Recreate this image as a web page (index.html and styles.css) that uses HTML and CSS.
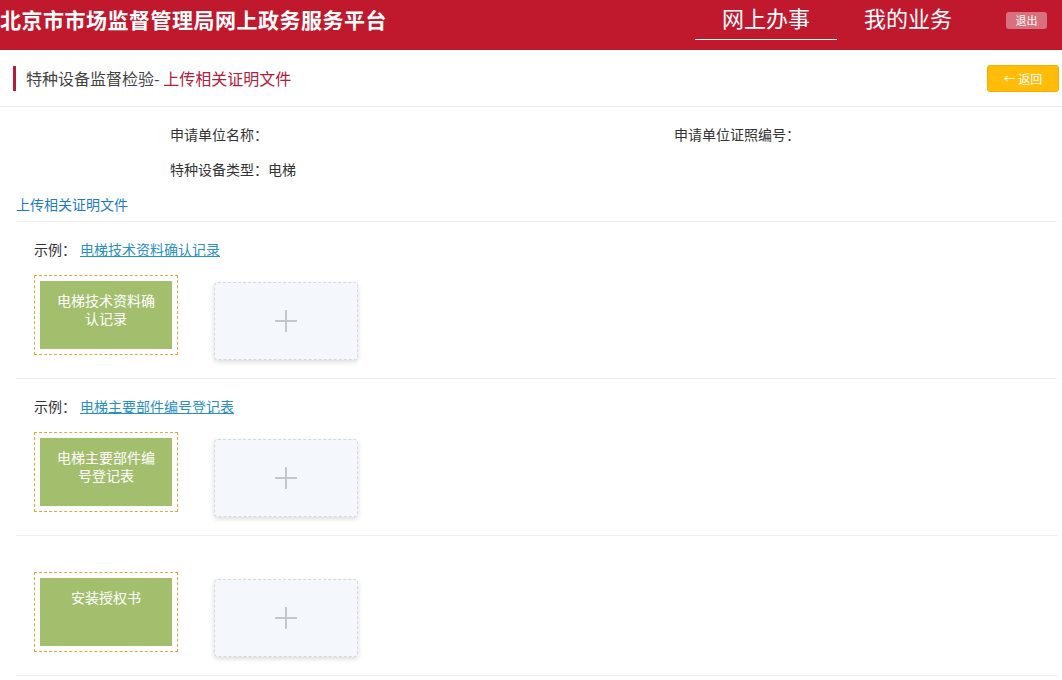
FILE: index.html
```html
<!DOCTYPE html>
<html lang="zh-CN">
<head>
    <meta charset="UTF-8">
    <meta name="viewport" content="width=device-width, initial-scale=1.0">
    <title>上传相关证明文件</title>
    <link rel="stylesheet" href="styles.css">
</head>
<body>

    <div class="top-bar">
        <div class="site-title">北京市市场监督管理局网上政务服务平台</div>
        <div class="nav">
            <a class="nav-item active">网上办事</a>
            <a class="nav-item">我的业务</a>
        </div>
        <a class="logout">退出</a>
    </div>

    <div class="page-head">
        <div class="page-title">特种设备监督检验- <span class="page-title-sub">上传相关证明文件</span></div>
        <a class="back-btn">← 返回</a>
    </div>

    <div class="main">
        <div class="info-grid">
            <div class="info-item">申请单位名称：</div>
            <div class="info-item">申请单位证照编号：</div>
            <div class="info-item">特种设备类型：电梯</div>
        </div>

        <div class="upload-title">上传相关证明文件</div>

        <div class="upload-section">
            <p class="example">示例：<a class="example-link">电梯技术资料确认记录</a></p>
            <div class="tile-row">
                <div class="sample-tile"><div class="sample-inner">电梯技术资料确认记录</div></div>
                <div class="upload-box">
                    <svg width="24" height="24" viewBox="0 0 24 24"><path d="M12 1v22M1 12h22" stroke="#c3c6cc" stroke-width="2" fill="none"/></svg>
                </div>
            </div>
        </div>

        <div class="upload-section">
            <p class="example">示例：<a class="example-link">电梯主要部件编号登记表</a></p>
            <div class="tile-row">
                <div class="sample-tile"><div class="sample-inner">电梯主要部件编号登记表</div></div>
                <div class="upload-box">
                    <svg width="24" height="24" viewBox="0 0 24 24"><path d="M12 1v22M1 12h22" stroke="#c3c6cc" stroke-width="2" fill="none"/></svg>
                </div>
            </div>
        </div>

        <div class="upload-section no-example">
            <div class="tile-row">
                <div class="sample-tile"><div class="sample-inner">安装授权书</div></div>
                <div class="upload-box">
                    <svg width="24" height="24" viewBox="0 0 24 24"><path d="M12 1v22M1 12h22" stroke="#c3c6cc" stroke-width="2" fill="none"/></svg>
                </div>
            </div>
        </div>
    </div>

</body>
</html>
```

FILE: styles.css
```css
*{
    margin: 0;
    padding: 0;
    box-sizing: border-box;
}

body{
    font-family: "Noto Sans CJK SC", "Liberation Sans", sans-serif;
    color: #333;
    background: #fff;
    font-size: 14px;
}

a{
    text-decoration: none;
    cursor: pointer;
}

.top-bar{
    height: 50px;
    background: #c0192e;
    display: flex;
    align-items: flex-start;
    color: #fff;
}

.top-bar .site-title{
    font-size: 21px;
    font-weight: bold;
    line-height: 24px;
    padding-top: 7px;
    letter-spacing: 0.5px;
}

.top-bar .nav{
    margin-left: auto;
    display: flex;
}

.top-bar .nav-item{
    width: 142px;
    height: 40px;
    line-height: 34px;
    text-align: center;
    font-size: 22px;
    color: #fff;
    border-bottom: 1px solid transparent;
}

.top-bar .nav-item.active{
    border-bottom-color: #fff;
}

.top-bar .logout{
    margin: 12px 15px 0 27px;
    width: 41px;
    height: 17px;
    line-height: 17px;
    border-radius: 3px;
    background: rgba(255, 255, 255, .38);
    color: #fff;
    font-size: 11px;
    text-align: center;
}

.page-head{
    height: 57px;
    padding: 0 3px 0 13px;
    display: flex;
    align-items: center;
    justify-content: space-between;
    border-bottom: 1px solid #eee;
}

.page-head .page-title{
    border-left: 3px solid #b41d37;
    padding-left: 10px;
    height: 25px;
    line-height: 25px;
    font-size: 16px;
    color: #444;
}

.page-head .page-title-sub{
    color: #b0203a;
}

.page-head .back-btn{
    width: 72px;
    height: 27px;
    line-height: 25px;
    border: 1px solid #f5ae00;
    border-radius: 3px;
    background: #ffbd0a;
    color: #fff;
    font-size: 12px;
    text-align: center;
}

.main{
    padding: 0 5px 0 16px;
}

.info-grid{
    display: grid;
    grid-template-columns: 504px 1fr;
    row-gap: 15px;
    padding: 17px 0 0 154px;
}

.info-grid .info-item{
    line-height: 20px;
    font-size: 14px;
    color: #333;
}

.upload-title{
    margin-top: 15px;
    padding-bottom: 7px;
    line-height: 20px;
    font-size: 14px;
    color: #1b7cc2;
    border-bottom: 1px solid #eee;
}

.upload-section{
    padding: 17px 0 18px 18px;
    border-bottom: 1px solid #eee;
}

.upload-section.no-example{
    padding-top: 36px;
}

.upload-section .example{
    line-height: 20px;
    font-size: 14px;
    color: #333;
    margin-bottom: 16px;
}

.upload-section .example-link{
    margin-left: 4px;
    color: #2a8fc2;
    text-decoration: underline;
}

.tile-row{
    display: flex;
    align-items: flex-start;
    gap: 36px;
}

.sample-tile{
    width: 144px;
    height: 80px;
    padding: 5px;
    border: 1px dashed #e8a43d;
}

.sample-tile .sample-inner{
    height: 100%;
    background: #a3bf6e;
    color: #fff;
    font-size: 14px;
    line-height: 18px;
    text-align: center;
    padding: 10px 12px 0;
}

.upload-box{
    margin-top: 7px;
    width: 144px;
    height: 78px;
    background: #f4f8fd;
    border: 1px dashed #d6dae0;
    border-radius: 4px;
    box-shadow: 0 2px 5px rgba(0, 0, 0, .14);
    display: flex;
    align-items: center;
    justify-content: center;
}
```
